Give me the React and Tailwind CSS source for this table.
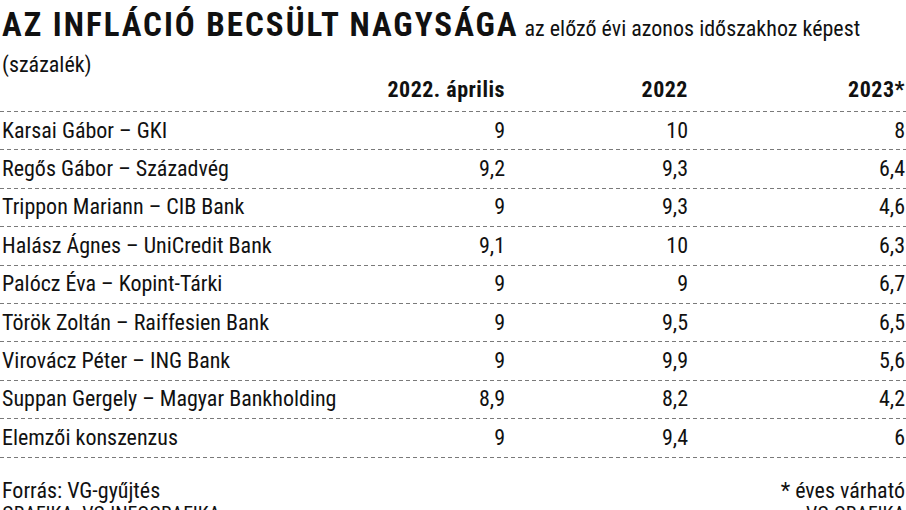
const rows = [
  ['Karsai Gábor – GKI', '9', '10', '8'],
  ['Regős Gábor – Századvég', '9,2', '9,3', '6,4'],
  ['Trippon Mariann – CIB Bank', '9', '9,3', '4,6'],
  ['Halász Ágnes – UniCredit Bank', '9,1', '10', '6,3'],
  ['Palócz Éva – Kopint-Tárki', '9', '9', '6,7'],
  ['Török Zoltán – Raiffesien Bank', '9', '9,5', '6,5'],
  ['Virovácz Péter – ING Bank', '9', '9,9', '5,6'],
  ['Suppan Gergely – Magyar Bankholding', '8,9', '8,2', '4,2'],
  ['Elemzői konszenzus', '9', '9,4', '6'],
];

const Dashed = () => (
  <div className="h-px w-full bg-[linear-gradient(to_right,#7a7a7a_4px,transparent_4px)] bg-[length:7px_1px]" />
);

const cols = 'grid grid-cols-[385px_120px_183px_217px]';

export default function App() {
  return (
    <div className="w-[906px] h-[510px] overflow-hidden bg-white text-[#111] font-['Roboto_Condensed',sans-serif]">
      <div className="flex items-baseline pt-[5px] h-[45px] leading-[40px] pl-[2px]">
        <h1 className="text-[33px] font-bold tracking-[2px]">AZ INFLÁCIÓ BECSÜLT NAGYSÁGA</h1>
        <span className="ml-[6px] text-[22px]">az előző évi azonos időszakhoz képest</span>
      </div>
      <div className="mt-[7px] pl-[2px] text-[22px] leading-[26px]">(százalék)</div>

      <div className={`${cols} -mt-[1px] pb-[8px] text-[22px] leading-[26px] font-bold tracking-[0.5px] text-right`}>
        <div />
        <div>2022. április</div>
        <div>2022</div>
        <div>2023*</div>
      </div>
      <Dashed />

      {rows.map((r) => (
        <div key={r[0]}>
          <div className={`${cols} h-[37.4px] items-center text-[22px] leading-[26px]`}>
            <div className="pl-[2px] whitespace-nowrap">{r[0]}</div>
            <div className="text-right">{r[1]}</div>
            <div className="text-right">{r[2]}</div>
            <div className="text-right">{r[3]}</div>
          </div>
          <Dashed />
        </div>
      ))}

      <div className="mt-[20px] flex justify-between pl-[2px] pr-[1px] text-[22px] leading-[26px]">
        <span>Forrás: VG-gyűjtés</span>
        <span>* éves várható</span>
      </div>
      <div className="-mt-[2px] flex justify-between pl-[2px] pr-[1px] text-[20px] leading-[24px] uppercase">
        <span>Grafika: VG-Infografika</span>
        <span>VG-Grafika</span>
      </div>
    </div>
  );
}
